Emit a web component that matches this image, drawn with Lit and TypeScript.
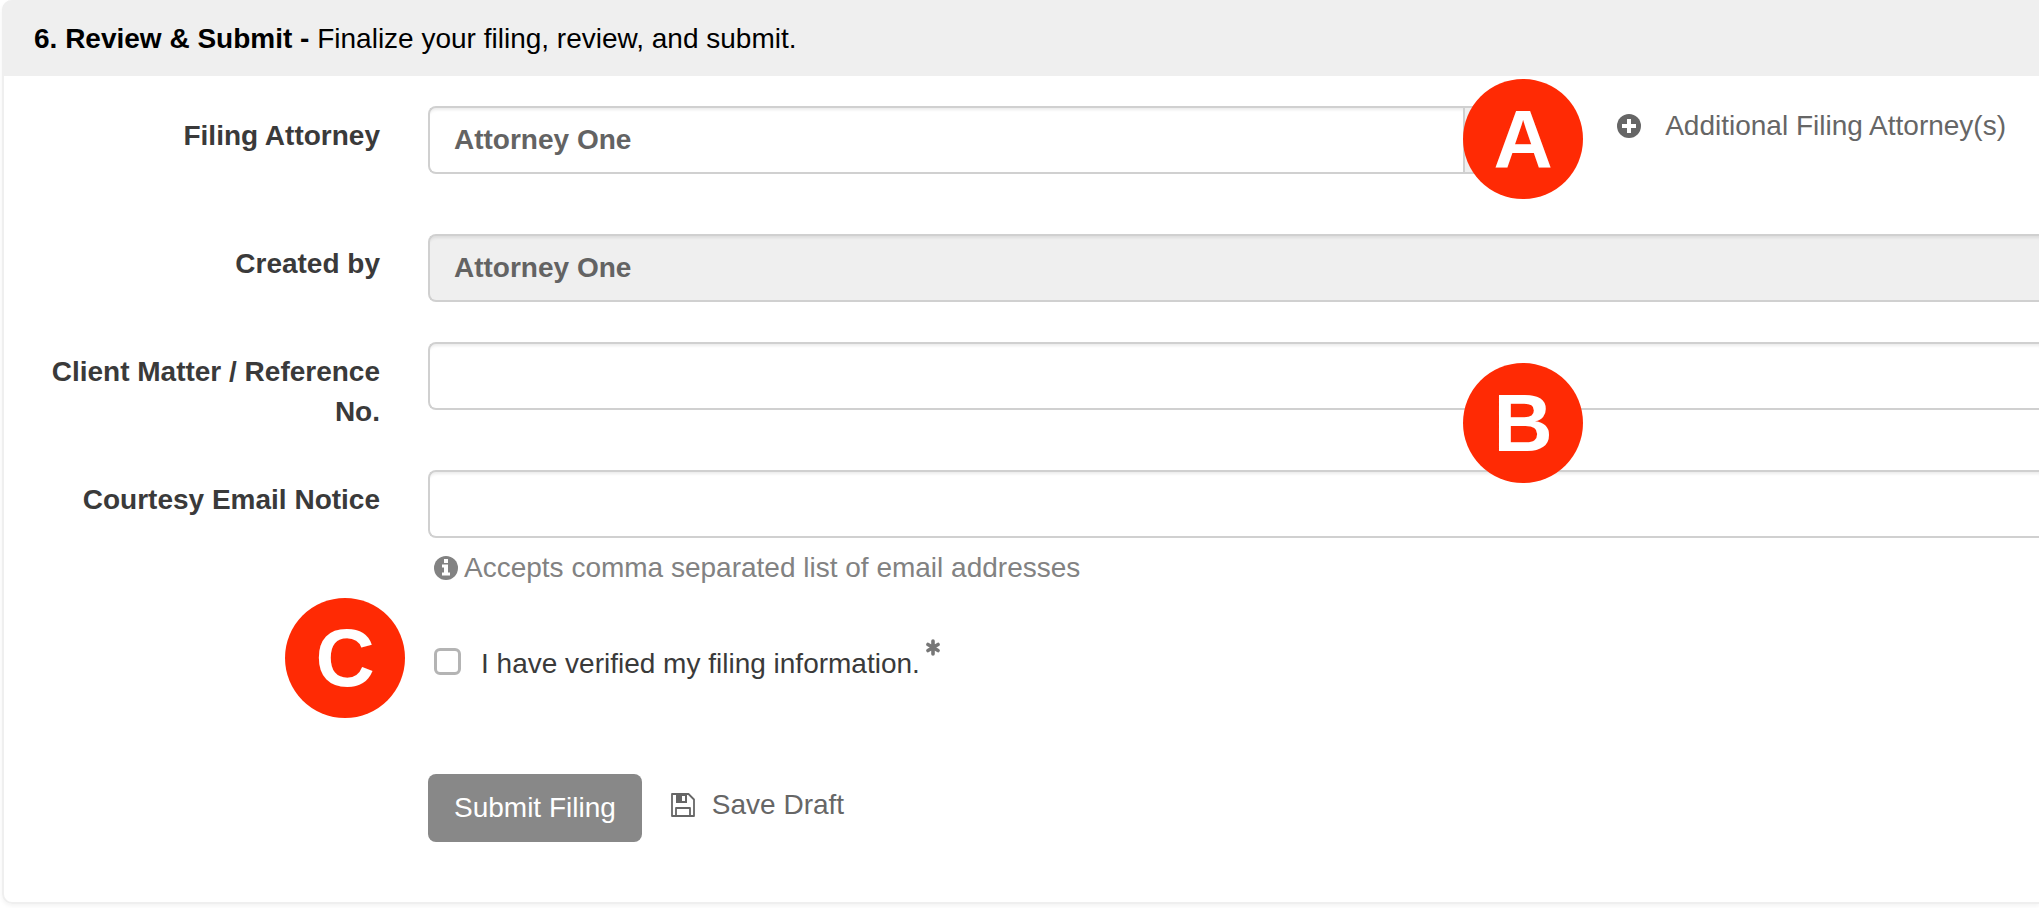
import { LitElement, html, css, svg } from "lit";
import { customElement, property, state } from "lit/decorators.js";

const plusCircle = svg`
  <circle cx="12" cy="12" r="12" fill="currentColor" />
  <path d="M10 5h4v5h5v4h-5v5h-4v-5H5v-4h5z" fill="#fff" />`;

const infoCircle = svg`
  <circle cx="12" cy="12" r="12" fill="currentColor" />
  <path d="M10 3h4v4h-4zM8 8.500h6v8h2v3H8v-3h2v-5H8z" fill="#fff" />`;

const floppy = svg`
  <path d="M1 1h16.500l5.500 5.500V23H1z" fill="none" stroke="currentColor" stroke-width="1.800" stroke-linejoin="round" />
  <path d="M5 1h11v9H5zM11 3v5h3V3z" fill="currentColor" fill-rule="evenodd" />
  <path d="M5 23v-8h14v8" fill="none" stroke="currentColor" stroke-width="1.800" stroke-linejoin="round" />`;

const asterisk = svg`
  <path d="M7 2v13M2 5.500l10 6M12 5.500l-10 6" stroke="currentColor" stroke-width="3.600" stroke-linecap="round" />`;

@customElement("step-badge")
export class StepBadge extends LitElement {
  @property() letter = "";

  static styles = css`
    :host {
      display: block;
      width: 120px;
      height: 120px;
      border-radius: 50%;
      background: #ff2a04;
      color: #fff;
      font: bold 82px/120px "Liberation Sans", Arial, sans-serif;
      text-align: center;
    }
  `;

  render() {
    return html`${this.letter}`;
  }
}

@customElement("app-root")
export class AppRoot extends LitElement {
  @state() private verified = false;

  static styles = css`
    :host {
      display: block;
      overflow: hidden;
      font: 28px/40px "Liberation Sans", Arial, sans-serif;
      color: #3a3a3a;
      background: #fff;
    }
    * {
      box-sizing: border-box;
    }
    .panel {
      margin: 0 0 4px 2px;
      border: solid #efefef;
      border-width: 0 0 2px 2px;
      border-radius: 10px 0 0 10px;
      box-shadow: 0 2px 4px rgba(0, 0, 0, 0.05);
    }
    .heading {
      margin: 0 0 0 -2px;
      padding: 19px 32px 17px;
      border-radius: 10px 0 0 0;
      background: #efefef;
      color: #000;
      font-size: 28px;
      font-weight: normal;
    }
    .form {
      display: flex;
      flex-direction: column;
      gap: 40px;
      padding: 30px 0 60px 24px;
    }
    .row {
      position: relative;
      display: grid;
      grid-template-columns: 352px minmax(0, 1fr);
      column-gap: 48px;
    }
    .attorney {
      grid-template-columns: 352px minmax(0, 1fr) auto;
      min-height: 88px;
    }
    .label {
      padding-top: 10px;
      margin-bottom: -2px;
      font-weight: bold;
      text-align: right;
    }
    .input {
      display: block;
      width: 100%;
      height: 68px;
      margin: 0;
      padding: 0 24px;
      border: 2px solid #d0d0d0;
      border-right: 0;
      border-radius: 8px 0 0 8px;
      background: #fff;
      box-shadow: inset 0 4px 3px -2px rgba(0, 0, 0, 0.08);
      color: #636363;
      font: bold 28px "Liberation Sans", Arial, sans-serif;
      outline: 0;
    }
    .input:disabled {
      background: #efefef;
    }
    .combo {
      position: relative;
      display: flex;
      height: 68px;
      margin-right: 24px;
    }
    .toggle {
      flex: none;
      width: 80px;
      border: 2px solid #d0d0d0;
      border-radius: 0 8px 8px 0;
      background: #efefef;
    }
    .badge {
      position: absolute;
      z-index: 1;
    }
    .badge-a {
      right: -40px;
      top: -27px;
    }
    .badge-b {
      right: 456px;
      top: 21px;
    }
    .badge-c {
      left: 257px;
      top: -30px;
    }
    .action {
      display: inline-flex;
      align-items: center;
      align-self: start;
      gap: 17px;
      color: #666;
      text-decoration: none;
    }
    .add {
      gap: 24px;
      padding: 0 33px 0 2px;
    }
    .icon {
      flex: none;
      width: 24px;
      height: 24px;
    }
    .help {
      display: flex;
      align-items: center;
      gap: 6px;
      margin: 10px 0 0 6px;
      color: #828282;
    }
    .verify {
      grid-column: 2;
      display: flex;
      align-items: center;
      padding: 16px 0 0 6px;
    }
    .check {
      appearance: none;
      flex: none;
      width: 27px;
      height: 27px;
      margin: 0 20px 6px 0;
      border: 3px solid #b4b4b4;
      border-radius: 6px;
      background: #fff;
    }
    .check:checked {
      background: #888;
    }
    .star {
      align-self: flex-start;
      width: 16px;
      height: 18px;
      margin: -5px 0 0 6px;
      color: #777;
    }
    .buttons {
      grid-column: 2;
      display: flex;
      gap: 29px;
      padding-top: 50px;
    }
    .submit {
      height: 68px;
      padding: 0 26px;
      border: 0;
      border-radius: 8px;
      background: #888;
      color: #fff;
      font: inherit;
    }
    .save {
      height: 62px;
      padding: 0;
      border: 0;
      background: none;
      font: inherit;
    }
  `;

  render() {
    return html`
      <section class="panel">
        <h2 class="heading">
          <strong>6. Review &amp; Submit -</strong> Finalize your filing, review, and submit.
        </h2>
        <form class="form" @submit=${(e: Event) => e.preventDefault()}>
          <div class="row attorney">
            <label class="label" for="attorney">Filing Attorney</label>
            <div class="combo">
              <input class="input" id="attorney" type="text" .value=${"Attorney One"} />
              <button class="toggle" type="button" aria-label="Show attorneys"></button>
              <step-badge class="badge badge-a" letter="A"></step-badge>
            </div>
            <a class="action add" href="#">
              <svg class="icon" viewBox="0 0 24 24" aria-hidden="true">${plusCircle}</svg>
              Additional Filing Attorney(s)
            </a>
          </div>
          <div class="row">
            <label class="label" for="creator">Created by</label>
            <input class="input" id="creator" type="text" disabled .value=${"Attorney One"} />
          </div>
          <div class="row">
            <label class="label" for="matter">Client Matter / Reference No.</label>
            <input class="input" id="matter" type="text" />
            <step-badge class="badge badge-b" letter="B"></step-badge>
          </div>
          <div class="row">
            <label class="label" for="email">Courtesy Email Notice</label>
            <div>
              <input class="input" id="email" type="text" />
              <div class="help">
                <svg class="icon" viewBox="0 0 24 24" aria-hidden="true">${infoCircle}</svg>
                Accepts comma separated list of email addresses
              </div>
            </div>
          </div>
          <div class="row">
            <step-badge class="badge badge-c" letter="C"></step-badge>
            <div class="verify">
              <input
                class="check"
                id="verified"
                type="checkbox"
                .checked=${this.verified}
                @change=${() => (this.verified = !this.verified)}
              />
              <label for="verified">I have verified my filing information.</label>
              <svg class="star" viewBox="0 0 16 18" aria-hidden="true">${asterisk}</svg>
            </div>
          </div>
          <div class="row">
            <div class="buttons">
              <button class="submit" type="submit">Submit Filing</button>
              <button class="action save" type="button">
                <svg class="icon" viewBox="0 0 24 24" aria-hidden="true">${floppy}</svg>
                Save Draft
              </button>
            </div>
          </div>
        </form>
      </section>
    `;
  }
}
